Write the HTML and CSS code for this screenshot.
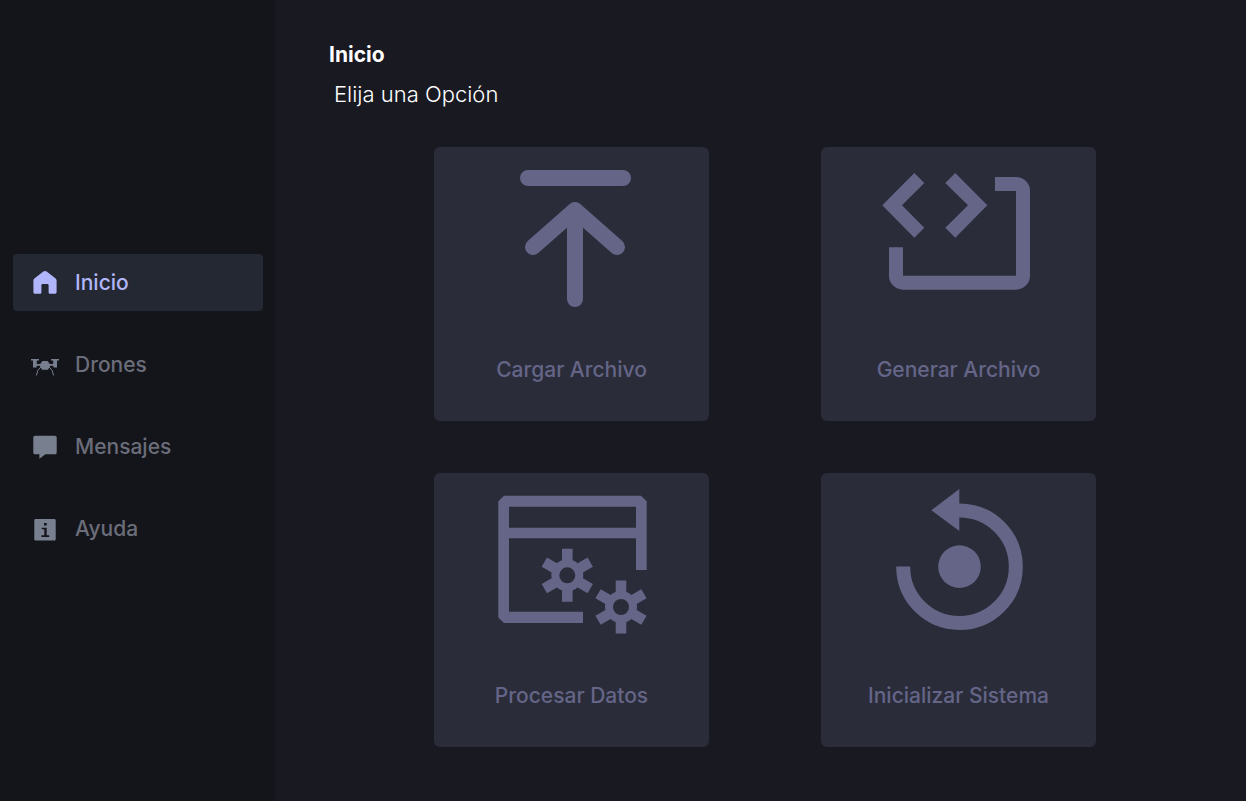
FILE: index.html
```html
<!DOCTYPE html>
<html lang="es">
<head>
<meta charset="utf-8">
<meta name="viewport" content="width=device-width, initial-scale=1">
<title>Inicio</title>
<link rel="stylesheet" href="styles.css">
</head>
<body>
<div class="app">
  <nav class="sidebar">
    <a class="nav-item active" href="#inicio">
      <svg class="nav-icon" viewBox="0 0 28 28" aria-hidden="true"><path d="M14 2.500c.8 0 1.400.3 2 .8l8 6.200c1 .8 1.600 1.700 1.600 3V23.500c0 1.200-.6 1.800-1.800 1.800h-4.600c-1 0-1.600-.6-1.600-1.600v-6.600c0-1-.4-1.500-1.300-1.500h-4.600c-.9 0-1.300.5-1.300 1.500v6.600c0 1-.6 1.600-1.600 1.600H4.200c-1.200 0-1.800-.6-1.800-1.800V12.500c0-1.300.6-2.200 1.600-3l8-6.200c.6-.5 1.200-.8 2-.8z"/></svg>
      <span>Inicio</span>
    </a>
    <a class="nav-item" href="#drones">
      <svg class="nav-icon" viewBox="0 0 28 28" aria-hidden="true"><path d="M0 8.500h8v1.400H5.800v3.600h3.400L11.500 10.500h5l2.300 3h3.400V9.900H20V8.500h8v1.400h-2v7h-3.600v-1.600h-3.200L17 19.200h-6l-2.200-3.900H5.600v1.600H2V9.900H0z"/><path class="line" d="M10 16.300Q6 19 5.400 25M18 16.300Q22 19 22.600 25"/></svg>
      <span>Drones</span>
    </a>
    <a class="nav-item" href="#mensajes">
      <svg class="nav-icon" viewBox="0 0 28 28" aria-hidden="true"><path d="M4.200 3.200h19.600c1.200 0 1.900.7 1.900 1.900v14.800c0 1.200-.7 1.900-1.900 1.900h-9.300L8.400 26.200v-4.400H4.200c-1.200 0-1.900-.7-1.900-1.900V5.100c0-1.200.7-1.900 1.900-1.900z"/></svg>
      <span>Mensajes</span>
    </a>
    <a class="nav-item" href="#ayuda">
      <svg class="nav-icon" viewBox="0 0 28 28" aria-hidden="true"><path fill-rule="evenodd" d="M4.800 4.500h18.400c1 0 1.500.5 1.500 1.500v18.600c0 1-.5 1.500-1.500 1.500H4.800c-1 0-1.500-.5-1.500-1.500V6c0-1 .5-1.500 1.500-1.500zM13 8.400v2.500h2.700V8.400zM10.700 13.200v1.600h2.600v6H10.400v1.600h7.800v-1.600h-2.500v-7.600z"/></svg>
      <span>Ayuda</span>
    </a>
  </nav>
  <main class="main">
    <h1 class="title">Inicio</h1>
    <p class="subtitle">Elija una Opción</p>
    <div class="cards">
      <button class="card" type="button">
        <svg class="card-icon" viewBox="0 0 176 176" aria-hidden="true"><path class="round" d="M44 31H139M91 152V63M49 100L91 63L133 100"/></svg>
        <span>Cargar Archivo</span>
      </button>
      <button class="card" type="button">
        <svg class="card-icon" viewBox="0 0 176 176" aria-hidden="true"><path d="M11.300 58.300L43.300 26l10 10L31 58.300l22.300 22.400-10 10zM116.300 58.300L84.300 26l-10 10L97 58.300 74.300 80.700l10 10zM124 30h21a14 14 0 0 1 14 14v84.700a14 14 0 0 1-14 14H32a14 14 0 0 1-14-14v-28.400h14v28.400h113V44h-21z"/></svg>
        <span>Generar Archivo</span>
      </button>
      <button class="card" type="button">
        <svg class="card-icon" viewBox="0 0 176 176" aria-hidden="true">
          <defs><g id="gear" class="gear"><circle r="12" stroke-width="8"/><path stroke-width="10.600" d="M0-13V-26.500M0 13V26.500M11.260-6.500L22.950-13.250M11.260 6.500L22.950 13.250M-11.260-6.500L-22.950-13.250M-11.260 6.500L-22.950 13.250"/></g></defs>
          <path fill-rule="evenodd" d="M20 22.700h137l5.700 5.600V97H152V65.300H25v73.400h74V150H20l-5.700-5.600V28.300zM25 33.700v21h127v-21z"/>
          <use href="#gear" x="83.300" y="102.300"/><use href="#gear" x="137" y="134"/>
        </svg>
        <span>Procesar Datos</span>
      </button>
      <button class="card" type="button">
        <svg class="card-icon" viewBox="0 0 176 176" aria-hidden="true"><path class="arc" d="M32.200 93.500A56.300 56.300 0 1 0 88.300 37.400H84"/><circle cx="88.500" cy="93.600" r="21.300"/><path d="M60.300 37.300L88.300 16v42z"/></svg>
        <span>Inicializar Sistema</span>
      </button>
    </div>
  </main>
</div>
</body>
</html>
```
FILE: styles.css
```css
* { box-sizing: border-box; }
body {
  margin: 0;
  background: #191922;
  color: #fff;
  font-family: Inter, "Open Sans", sans-serif;
  font-size: 21px;
  line-height: 24px;
}
.app {
  display: grid;
  grid-template-columns: 275px 1fr;
  min-height: 100vh;
}
.sidebar {
  display: flex;
  flex-direction: column;
  justify-content: center;
  gap: 25px;
  padding: 10px 12px 0 13px;
  background: #14151a;
}
.nav-item {
  display: flex;
  align-items: center;
  gap: 16px;
  padding: 14px 18px;
  border-radius: 4px;
  color: #6b6d7a;
  font-weight: 500;
  text-decoration: none;
}
.nav-item.active { background: #242832; color: #b1b5fa; }
.nav-icon { width: 28px; height: 29px; fill: #788090; }
.nav-item.active .nav-icon { fill: #b1b5fa; }
.line { fill: none; stroke: #788090; stroke-width: 1; }
.main { padding: 43px 54px; }
.title { margin: 0; font-size: 21px; font-weight: 700; }
.subtitle { margin: 15px 5px 0; font-size: 22px; font-weight: 300; }
.cards {
  display: grid;
  grid-template-columns: repeat(2, 275px);
  justify-content: center;
  gap: 52px 112px;
  margin-top: 41px;
  padding-left: 9px;
}
.card {
  display: flex;
  flex-direction: column;
  align-items: center;
  gap: 35px;
  padding: 0 0 39px;
  border: 0;
  border-radius: 6px;
  background: #2b2c3a;
  color: #646587;
  font: inherit;
  font-weight: 500;
  cursor: pointer;
}
.card-icon { width: 176px; height: 176px; fill: #646587; }
.round {
  fill: none;
  stroke: #646587;
  stroke-width: 16;
  stroke-linecap: round;
  stroke-linejoin: round;
}
.arc { fill: none; stroke: #646587; stroke-width: 14; }
.gear { fill: none; stroke: #646587; }
```
